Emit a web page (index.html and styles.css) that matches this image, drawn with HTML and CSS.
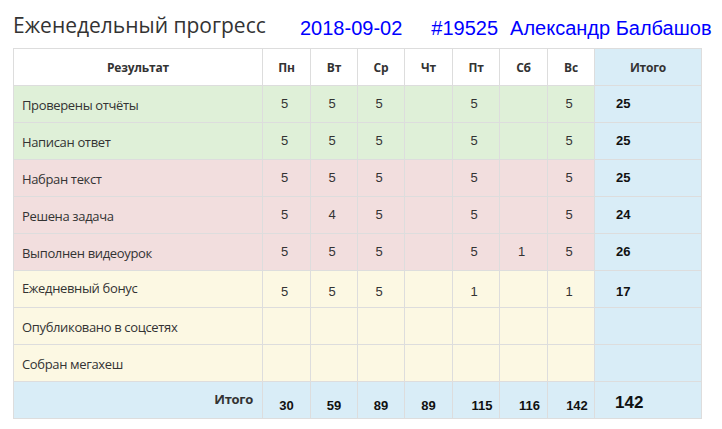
FILE: index.html
```html
<!DOCTYPE html>
<html lang="ru">
<head>
<meta charset="utf-8">
<link rel="stylesheet" href="styles.css">
</head>
<body>
<div class="page">
  <div class="top">
    <h1 class="title">Еженедельный прогресс</h1>
    <div class="meta">
      <span class="date">2018-09-02</span>
      <span class="id">#19525</span>
      <span class="name">Александр Балбашов</span>
    </div>
  </div>
  <table class="grid">
    <colgroup>
      <col class="c-label"><col class="c-d1"><col class="c-d2"><col class="c-d3"><col class="c-d4"><col class="c-d5"><col class="c-d6"><col class="c-d7"><col class="c-total">
    </colgroup>
    <thead>
      <tr>
        <th>Результат</th><th>Пн</th><th>Вт</th><th>Ср</th><th>Чт</th><th>Пт</th><th>Сб</th><th>Вс</th><th class="tot">Итого</th>
      </tr>
    </thead>
    <tbody>
      <tr class="green">
        <td class="label">Проверены отчёты</td><td class="n">5</td><td class="n">5</td><td class="n">5</td><td class="n"></td><td class="n">5</td><td class="n"></td><td class="n">5</td><td class="sum">25</td>
      </tr>
      <tr class="green">
        <td class="label">Написан ответ</td><td class="n">5</td><td class="n">5</td><td class="n">5</td><td class="n"></td><td class="n">5</td><td class="n"></td><td class="n">5</td><td class="sum">25</td>
      </tr>
      <tr class="red">
        <td class="label">Набран текст</td><td class="n">5</td><td class="n">5</td><td class="n">5</td><td class="n"></td><td class="n">5</td><td class="n"></td><td class="n">5</td><td class="sum">25</td>
      </tr>
      <tr class="red">
        <td class="label">Решена задача</td><td class="n">5</td><td class="n">4</td><td class="n">5</td><td class="n"></td><td class="n">5</td><td class="n"></td><td class="n">5</td><td class="sum">24</td>
      </tr>
      <tr class="red">
        <td class="label">Выполнен видеоурок</td><td class="n">5</td><td class="n">5</td><td class="n">5</td><td class="n"></td><td class="n">5</td><td class="n">1</td><td class="n">5</td><td class="sum">26</td>
      </tr>
      <tr class="yellow low">
        <td class="label">Ежедневный бонус</td><td class="n">5</td><td class="n">5</td><td class="n">5</td><td class="n"></td><td class="n">1</td><td class="n"></td><td class="n">1</td><td class="sum">17</td>
      </tr>
      <tr class="yellow">
        <td class="label">Опубликовано в соцсетях</td><td class="n"></td><td class="n"></td><td class="n"></td><td class="n"></td><td class="n"></td><td class="n"></td><td class="n"></td><td class="sum"></td>
      </tr>
      <tr class="yellow">
        <td class="label">Собран мегахеш</td><td class="n"></td><td class="n"></td><td class="n"></td><td class="n"></td><td class="n"></td><td class="n"></td><td class="n"></td><td class="sum"></td>
      </tr>
    </tbody>
    <tfoot>
      <tr class="blue">
        <td class="foot-label">Итого</td><td class="fn">30</td><td class="fn">59</td><td class="fn">89</td><td class="fn">89</td><td class="fn wide">115</td><td class="fn wide">116</td><td class="fn wide">142</td><td class="grand">142</td>
      </tr>
    </tfoot>
  </table>
</div>
</body>
</html>
```

FILE: styles.css
```css
html, body {
  margin: 0;
  padding: 0;
  background: #ffffff;
}

.page {
  padding: 0 0 0 13px;
  width: 709px;
}

.top {
  display: flex;
  align-items: flex-end;
  height: 40px;
  margin-bottom: 8px;
}

.title {
  margin: 0;
  width: 287px;
  font-family: "Open Sans", "Noto Sans", sans-serif;
  font-weight: 400;
  font-size: 21px;
  line-height: 26px;
  color: #333333;
  flex: none;
  padding-bottom: 2px;
}

.meta {
  display: flex;
  font-family: "Liberation Sans", Arial, sans-serif;
  font-size: 20px;
  line-height: 24px;
  color: #0000ff;
  white-space: nowrap;
}

.id {
  margin-left: 29px;
}

.name {
  margin-left: 12px;
}

.grid {
  border-collapse: collapse;
  table-layout: fixed;
  width: 689px;
  border: 1px solid #dddddd;
  font-family: "Open Sans", "Noto Sans", sans-serif;
  color: #333333;
}

.c-label { width: 249px; }
.c-d1 { width: 48px; }
.c-d2 { width: 47px; }
.c-d3 { width: 47px; }
.c-d4 { width: 48px; }
.c-d5 { width: 47px; }
.c-d6 { width: 48px; }
.c-d7 { width: 47px; }
.c-total { width: 107px; }

.grid th,
.grid td {
  border: 1px solid #dddddd;
  height: 37px;
  padding: 0;
  box-sizing: border-box;
  vertical-align: middle;
}

.grid th {
  font-size: 12px;
  font-weight: 700;
  letter-spacing: -0.2px;
  text-align: center;
  background: #ffffff;
  padding-top: 1px;
}

.grid th.tot {
  background: #d9edf7;
}

.green td { background: #dff0d8; }
.red td { background: #f2dede; }
.yellow td { background: #fcf8e3; }
.blue td { background: #d9edf7; }

.grid td.sum,
.grid td.grand {
  background: #d9edf7;
}

.label {
  font-size: 13px;
  letter-spacing: -0.35px;
  padding: 1px 0 0 8px !important;
  text-align: left;
}

.n {
  font-family: "Liberation Sans", Arial, sans-serif;
  font-size: 13px;
  text-align: center;
  padding-bottom: 2px !important;
  padding-right: 4px !important;
}

.low .n {
  padding-top: 5px !important;
  padding-bottom: 0 !important;
}

.low .label {
  padding-top: 0 !important;
  padding-bottom: 2px !important;
}

.sum {
  font-family: "Liberation Sans", Arial, sans-serif;
  font-size: 13px;
  font-weight: 700;
  text-align: left;
  padding: 0 0 2px 21px !important;
  color: #111111;
}

.low .sum {
  padding-top: 5px !important;
  padding-bottom: 0 !important;
}

.foot-label {
  font-size: 13px;
  font-weight: 700;
  letter-spacing: -0.3px;
  text-align: right;
  padding: 0 9px 3px 0 !important;
}

.fn {
  font-family: "Liberation Sans", Arial, sans-serif;
  font-size: 13px;
  font-weight: 700;
  text-align: center;
  color: #111111;
  padding-top: 10px !important;
}

.fn.wide {
  padding-left: 12px !important;
}

.grand {
  font-family: "Liberation Sans", Arial, sans-serif;
  font-size: 17px;
  font-weight: 700;
  text-align: left;
  color: #111111;
  padding: 5px 0 0 20px !important;
}
```
